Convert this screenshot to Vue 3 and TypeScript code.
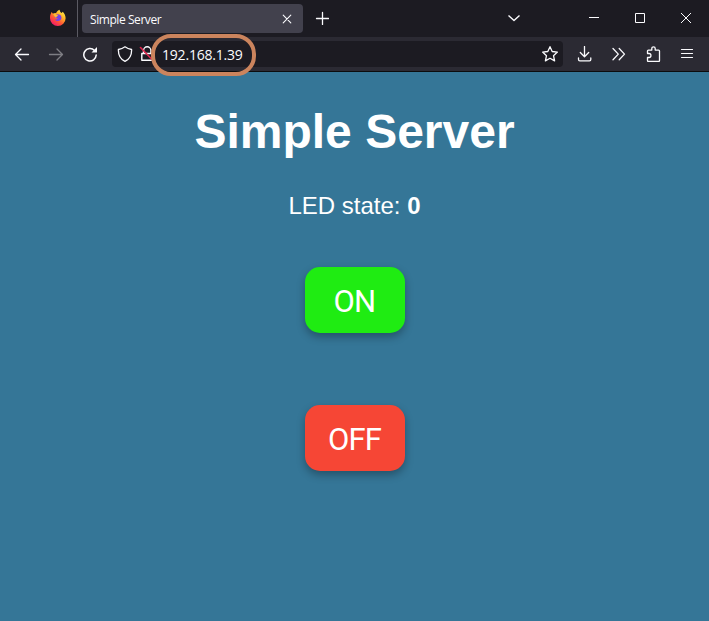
<script setup lang="ts">
import { ref } from 'vue'

const title = 'Simple Server'
const address = '192.168.1.39'
const ledState = ref<number>(0)

function setLed(value: number): void {
  ledState.value = value
}
</script>

<template>
  <div class="window">
    <header class="titlebar">
      <div class="brand">
        <svg width="18" height="18" viewBox="0 0 18 18">
          <defs>
            <linearGradient id="flame" x1="0.85" y1="0.05" x2="0.2" y2="0.95">
              <stop offset="0" stop-color="#fff04a" />
              <stop offset="0.35" stop-color="#ffae25" />
              <stop offset="0.65" stop-color="#ff5636" />
              <stop offset="1" stop-color="#f5156c" />
            </linearGradient>
          </defs>
          <path fill="url(#flame)" d="M2.6 3.1 4 4.8C5 4.2 6 4 7 4.2 7.8 2.6 9 1.4 10.6.8c.1 1.6 1 2.4 2 3.3l1.2-1.4c1.8 1.8 2.8 4 2.8 6.5a7.8 7.8 0 0 1-15.6 0C.9 6.700 1.600 5 2.600 3.100Z" />
          <path fill="#7542e5" d="M5.500 7.200C6.600 5.400 9 4.500 11 5.800c1.900 1.300 2 4.100.3 5.500-1.700 1.400-4.400.9-5.400-.9 1.200.4 2.200 0 3-.8-.8-.5-1.700-.7-2.300-.7-.8-.2-1.200-.9-1.100-1.700Z" />
          <path fill="#ffbd32" d="M4 4.800c1-.6 2-.8 3-.4-.3.800.2 1.200 2.200 1.800-.3 1-1.700 1.200-1.900 2.200-1 .2-1.700-.4-1.800-1.200Z" />
        </svg>
      </div>
      <div class="tab">
        <span class="tab-label">{{ title }}</span>
        <svg class="tab-close" width="10" height="10" viewBox="0 0 10 10">
          <path d="m1.200 1.200 7.600 7.600m0-7.600-7.600 7.600" stroke-width="1.100" />
        </svg>
      </div>
      <div class="new-tab">
        <svg width="14" height="14" viewBox="0 0 14 14"><path d="M7.500 1.500v12M1.500 7.500h12" /></svg>
      </div>
      <div class="window-controls">
        <div class="control list-tabs">
          <svg width="14" height="14" viewBox="0 0 14 14"><path d="m1.500 4.500 5.500 5 5.500-5" stroke-width="1.400" /></svg>
        </div>
        <div class="control">
          <svg width="12" height="12" viewBox="0 0 12 12"><path d="M1 5.500h10" stroke-width="1" /></svg>
        </div>
        <div class="control">
          <svg width="12" height="12" viewBox="0 0 12 12"><path d="M1.500 1.500h9v9h-9z" stroke-width="1" stroke-linejoin="miter" /></svg>
        </div>
        <div class="control">
          <svg width="12" height="12" viewBox="0 0 12 12"><path d="m1 1 10 10m0-10L1 11" stroke-width="1" /></svg>
        </div>
      </div>
    </header>

    <nav class="toolbar">
      <div class="tool">
        <svg width="16" height="16" viewBox="0 0 16 16"><path d="M14.500 8.500h-13M7 3 1.500 8.500 7 14" /></svg>
      </div>
      <div class="tool dim">
        <svg width="16" height="16" viewBox="0 0 16 16"><path d="M1.500 8.500h13M9 3l5.500 5.500L9 14" /></svg>
      </div>
      <div class="tool">
        <svg width="16" height="16" viewBox="0 0 16 16">
          <path d="M12.500 4.500A6.200 6.200 0 1 0 14.200 9" stroke-width="1.500" />
          <path class="solid" d="M15 1v5.500H9.500Z" />
        </svg>
      </div>
      <div class="urlbar">
        <svg width="16" height="16" viewBox="0 0 16 16">
          <path d="M8 .8c2 1.500 4 2.300 6.600 2.700.2 5.200-1.400 9.400-6.600 11.900C2.800 12.900 1.200 8.700 1.400 3.500 4 3.100 6 2.300 8 .8Z" stroke-width="1.300" />
        </svg>
        <svg class="lock" width="16" height="16" viewBox="0 0 16 16">
          <path d="M4.500 7V4.500a3.700 3.700 0 0 1 7.400 0V7M2.800 7.500h10.800v6.800H2.800z" stroke-width="1.400" />
          <path class="slash" d="m1.500 1.500 13 13.500" />
        </svg>
        <span class="address">{{ address }}<span class="highlight"></span></span>
        <svg class="star" width="18" height="18" viewBox="0 0 18 18">
          <path d="m9 1.700 2.200 4.800 5.200.6-3.900 3.600 1.100 5.200L9 13.300l-4.600 2.600 1.100-5.200-3.900-3.600 5.200-.6Z" stroke-width="1.300" />
        </svg>
      </div>
      <div class="tool">
        <svg width="16" height="16" viewBox="0 0 16 16">
          <path d="M7.500.5v10M3.300 6.500l4.200 4.200 4.200-4.200M1.500 12v1.500c0 .800.500 1.300 1.300 1.300h9.700c.8 0 1.300-.5 1.300-1.300V12" />
        </svg>
      </div>
      <div class="tool">
        <svg width="16" height="16" viewBox="0 0 16 16"><path d="m2 2.500 5.300 5.600L2 13.700M8.200 2.500l5.300 5.600-5.300 5.600" /></svg>
      </div>
      <div class="tool">
        <svg width="16" height="16" viewBox="0 0 16 16">
          <path d="M2.500 7.500V5c0-.6.300-.9.900-.9h3.400V2.500a1.700 1.700 0 0 1 3.400 0v1.600h3.400c.6 0 .9.300.9.900v9.600c0 .6-.3.900-.9.900H3.400c-.6 0-.9-.3-.9-.9V11.500H4c2.600 0 2.600-4 0-4Z" />
        </svg>
      </div>
      <div class="tool">
        <svg width="16" height="16" viewBox="0 0 16 16"><path d="M2.500 3.500h11m-11 4h11m-11 4h11" stroke-width="1.200" /></svg>
      </div>
    </nav>

    <main class="page">
      <h1>{{ title }}</h1>
      <p>LED state: <strong>{{ ledState }}</strong></p>
      <button class="on" type="button" @click="setLed(1)">ON</button>
      <button class="off" type="button" @click="setLed(0)">OFF</button>
    </main>
  </div>
</template>

<style>
body {
  margin: 0;
  background: #357798;
}
</style>

<style scoped>
.window {
  display: flex;
  flex-direction: column;
  height: 621px;
  overflow: hidden;
  color: #fbfbfe;
  background: #357697;
}

svg {
  display: block;
  flex: none;
  fill: none;
  stroke: #fbfbfe;
  stroke-width: 1.3;
  stroke-linecap: round;
  stroke-linejoin: round;
}

.titlebar {
  display: flex;
  align-items: flex-start;
  height: 37px;
  flex: none;
  background: #1c1b22;
}

.brand {
  box-sizing: border-box;
  width: 78px;
  height: 37px;
  padding: 9px 0 0 49px;
  border-right: 1px solid #5b5a63;
}

.brand svg {
  stroke: none;
}

.tab {
  box-sizing: border-box;
  display: flex;
  align-items: center;
  justify-content: space-between;
  width: 221px;
  height: 29px;
  margin: 4px 0 0 4px;
  padding: 1px 11px 0 8px;
  border-radius: 4px;
  background: #42414d;
}

.tab-label {
  padding-top: 2px;
  font: 12px/16px "Open Sans", "Noto Sans", sans-serif;
  letter-spacing: -0.43px;
}

.new-tab {
  padding: 11px 0 0 12px;
}

.window-controls {
  display: flex;
  margin-left: auto;
}

.control {
  display: flex;
  align-items: center;
  justify-content: center;
  width: 46px;
  height: 36px;
}

.control svg {
  stroke-linecap: butt;
}

.list-tabs {
  margin-right: 34px;
}

.toolbar {
  box-sizing: border-box;
  display: flex;
  align-items: center;
  height: 35px;
  flex: none;
  padding: 0 5px;
  border-bottom: 1px solid #0c0c0d;
  background: #2b2a33;
}

.tool {
  display: flex;
  align-items: center;
  justify-content: center;
  width: 34px;
}

.dim {
  opacity: 0.4;
}

.solid {
  fill: #fbfbfe;
  stroke: none;
}

.urlbar {
  box-sizing: border-box;
  display: flex;
  align-items: center;
  flex: 1;
  height: 26px;
  margin: 0 5px;
  padding: 0 4px 0 5px;
  border-radius: 4px;
  background: #1c1b22;
}

.lock {
  margin-left: 6px;
}

.slash {
  stroke: #e22850;
  stroke-width: 1.6;
}

.address {
  position: relative;
  margin-left: 7px;
  padding-top: 2px;
  font: 14px/20px "Open Sans", "Noto Sans", sans-serif;
  letter-spacing: -0.2px;
}

.highlight {
  position: absolute;
  box-sizing: border-box;
  top: -9px;
  left: -11px;
  width: 105px;
  height: 42px;
  border: 4px solid #cb845d;
  border-radius: 20px;
}

.star {
  margin-left: auto;
}

.page {
  display: flex;
  flex: 1;
  flex-direction: column;
  align-items: center;
  color: #fff;
  font-family: "Liberation Sans", Arial, sans-serif;
}

h1 {
  margin: 32px 0 0;
  font-size: 48px;
  line-height: 56px;
}

p {
  margin: 32px 0 0;
  font-size: 24px;
  line-height: 28px;
}

button {
  width: 100px;
  height: 66px;
  padding: 3px 0 0;
  border: 0;
  border-radius: 15px;
  color: #fff;
  font: 31px/36px Roboto, sans-serif;
  letter-spacing: -0.8px;
  box-shadow: 0 4px 8px rgba(0, 0, 0, 0.3);
}

.on {
  margin-top: 47px;
  background: #1fec12;
}

.off {
  margin-top: 72px;
  background: #f64635;
}
</style>
